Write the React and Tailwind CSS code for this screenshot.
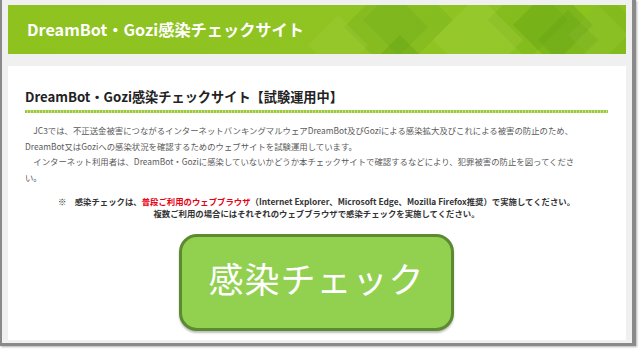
const jp = "font-['Noto_Sans_CJK_JP','Noto_Sans',sans-serif]";

const BannerPattern = () => (
  <svg
    className="absolute inset-0 h-full w-full"
    viewBox="0 0 618 49"
    preserveAspectRatio="none"
  >
    <g fill="#5d9e14">
      <polygon points="378,-20 420,22 378,64 336,22" opacity="0.2" />
      <polygon points="400,-30 445,15 400,60 355,15" opacity="0.18" />
      <polygon points="392,30 420,58 392,86 364,58" opacity="0.32" />
      <polygon points="520,-25 560,15 520,55 480,15" opacity="0.16" />
      <polygon points="545,-20 585,20 545,60 505,20" opacity="0.32" />
      <polygon points="560,5 590,35 560,65 530,35" opacity="0.28" />
      <polygon points="600,-10 640,30 600,70 560,30" opacity="0.16" />
    </g>
    <g fill="#b6dd55">
      <polygon points="470,-10 515,35 470,80 425,35" opacity="0.2" />
      <polygon points="330,10 360,40 330,70 300,40" opacity="0.15" />
      <polygon points="590,0 620,30 590,60 560,30" opacity="0.15" />
    </g>
  </svg>
);

const Banner = () => (
  <div className="relative h-[49px] overflow-hidden bg-[linear-gradient(90deg,#8dc21f,#90c423_60%,#8bc21e)]">
    <BannerPattern />
    <h1 className={`relative pl-[19px] text-[16.2px] leading-[49px] font-bold text-white ${jp}`}>
      DreamBot・Gozi感染チェックサイト
    </h1>
  </div>
);

const CheckButton = () => (
  <div className="mt-[15px] flex justify-center">
    <button className="flex h-[97px] w-[275px] items-center justify-center rounded-[18px] border-[3px] border-[#5b8a31] bg-[#92d050] pb-[8px] shadow-[0_2px_2px_rgba(0,0,0,0.25)]">
      <span className={`text-[35px] font-normal tracking-[1px] text-white ${jp}`}>
        感染チェック
      </span>
    </button>
  </div>
);

const App = () => {
  return (
    <div className="h-[349px] w-[640px] bg-white">
      <div className="h-[346px] w-[636px] border-b-[3px] border-l-[2px] border-r-[4px] border-[#8a8a8a] bg-[#f0f0f0] px-[6px] pt-[5px] pb-[2px] shadow-[1px_1px_2px_rgba(0,0,0,0.3)]">
        <Banner />
        <div className={`mt-[12px] h-[274px] bg-white pr-[18px] pl-[17px] pt-[23px] ${jp}`}>
          <h2 className="text-[13.2px] leading-[16px] font-bold text-[#222]">
            DreamBot・Gozi感染チェックサイト【試験運用中】
          </h2>
          <div className="mt-[5px] h-[3px] bg-[repeating-linear-gradient(90deg,#9bcb3c_0_2px,#c6e28a_2px_3px)]" />
          <div className="mt-[10px] text-[8.4px] leading-[15.7px] whitespace-nowrap text-[#5a5a5a]">
            <p>　JC3では、不正送金被害につながるインターネットバンキングマルウェアDreamBot及びGoziによる感染拡大及びこれによる被害の防止のため、</p>
            <p>DreamBot又はGoziへの感染状況を確認するためのウェブサイトを試験運用しています。</p>
            <p>　インターネット利用者は、DreamBot・Goziに感染していないかどうか本チェックサイトで確認するなどにより、犯罪被害の防止を図ってくださ</p>
            <p>い。</p>
          </div>
          <div className="mt-[9px] text-center text-[8.4px] leading-[12px] font-bold whitespace-nowrap text-[#333]">
            <p>
              ※　感染チェックは、<span className="text-[#e60012]">普段ご利用のウェブブラウザ</span>（Internet Explorer、Microsoft Edge、Mozilla Firefox推奨）で実施してください。
            </p>
            <p>複数ご利用の場合にはそれぞれのウェブブラウザで感染チェックを実施してください。</p>
          </div>
          <CheckButton />
        </div>
      </div>
    </div>
  );
};

export default App;
